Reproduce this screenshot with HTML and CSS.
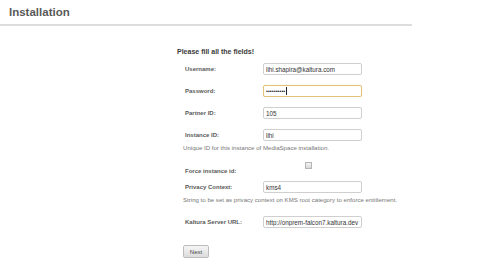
FILE: index.html
```html
<!DOCTYPE html>
<html lang="en">
<head>
  <meta charset="UTF-8">
  <meta name="viewport" content="width=device-width, initial-scale=1.0">
  <title>Installation</title>
  <link rel="stylesheet" href="styles.css">
</head>
<body>
  <div class="header">
    <h1>Installation</h1>
  </div>
  <form class="install_form">
    <h3>Please fill all the fields!</h3>
    <div class="field">
      <label>Username:</label>
      <input class="text_input" type="text" value="lihi.shapira@kaltura.com">
    </div>
    <div class="field">
      <label>Password:</label>
      <span class="text_input focused">••••••••••<i class="caret"></i></span>
    </div>
    <div class="field">
      <label>Partner ID:</label>
      <input class="text_input" type="text" value="105">
    </div>
    <div class="field">
      <label>Instance ID:</label>
      <input class="text_input" type="text" value="lihi">
    </div>
    <p class="desc">Unique ID for this instance of MediaSpace installation.</p>
    <div class="field check_field">
      <label>Force instance id:</label>
      <span class="checkbox"></span>
    </div>
    <div class="field">
      <label>Privacy Context:</label>
      <input class="text_input" type="text" value="kms4">
    </div>
    <p class="desc">String to be set as privacy context on KMS root category to enforce entitlement.</p>
    <div class="field server">
      <label>Kaltura Server URL:</label>
      <input class="text_input" type="text" value="http://onprem-falcon7.kaltura.dev">
    </div>
    <button class="next_btn" type="button">Next</button>
  </form>
</body>
</html>
```

FILE: styles.css
```css
*{
  margin: 0;
  padding: 0;
  box-sizing: border-box;
}

body{
  font-family: "Liberation Sans", Arial, sans-serif;
  background-color: #fff;
  overflow: hidden;
}

.header{
  width: 412px;
  padding: 5px 0 4px 9px;
  border-bottom: 2px solid #dcdcdc;
}

.header > h1{
  font-size: 11.5px;
  line-height: 15px;
  color: #595959;
}

.install_form{
  margin-left: 177px;
  padding-top: 21px;
  width: 260px;
}

.install_form > h3{
  font-size: 7px;
  line-height: 10px;
  color: #3a3a3a;
  margin-bottom: 6px;
}

.field{
  display: flex;
  align-items: center;
  height: 12px;
  margin-bottom: 10px;
}

.field > label{
  width: 86px;
  padding-left: 8px;
  font-size: 6px;
  font-weight: bold;
  color: #5a5a5a;
}

.text_input{
  width: 99px;
  height: 12px;
  border: 1px solid #cfcfcf;
  border-radius: 2px;
  padding: 0 2px;
  font-family: "Liberation Sans", Arial, sans-serif;
  font-size: 6.3px;
  color: #333;
  background: #fff;
  outline: none;
}

.text_input.focused{
  display: flex;
  align-items: center;
  border-color: #e3c27a;
  box-shadow: 0 0 1px #f0d9a6;
  font-size: 5.5px;
  color: #222;
}

.text_input > .caret{
  display: block;
  width: 1px;
  height: 8px;
  margin-left: 1px;
  background-color: #222;
}

.desc{
  font-size: 6.1px;
  color: #777;
  margin: -7px 0 0 6px;
  line-height: 8px;
  white-space: nowrap;
}

.check_field{
  margin-top: 10px;
  align-items: flex-start;
  margin-bottom: 7px;
}

.check_field > label{
  margin-top: 6px;
}

.checkbox{
  display: block;
  width: 7px;
  height: 7px;
  margin-left: 42px;
  border: 1px solid #b5b5b5;
  background: linear-gradient(#f4f4f4, #d8d8d8);
}

.server{
  margin-top: 12px;
  margin-bottom: 17px;
}

.next_btn{
  display: block;
  margin-left: 6px;
  width: 26px;
  height: 13px;
  border: 1px solid #bcbcbc;
  border-radius: 2px;
  background: linear-gradient(#f6f6f6, #dcdcdc);
  font-family: "Liberation Sans", Arial, sans-serif;
  font-size: 6px;
  color: #444;
}
```
